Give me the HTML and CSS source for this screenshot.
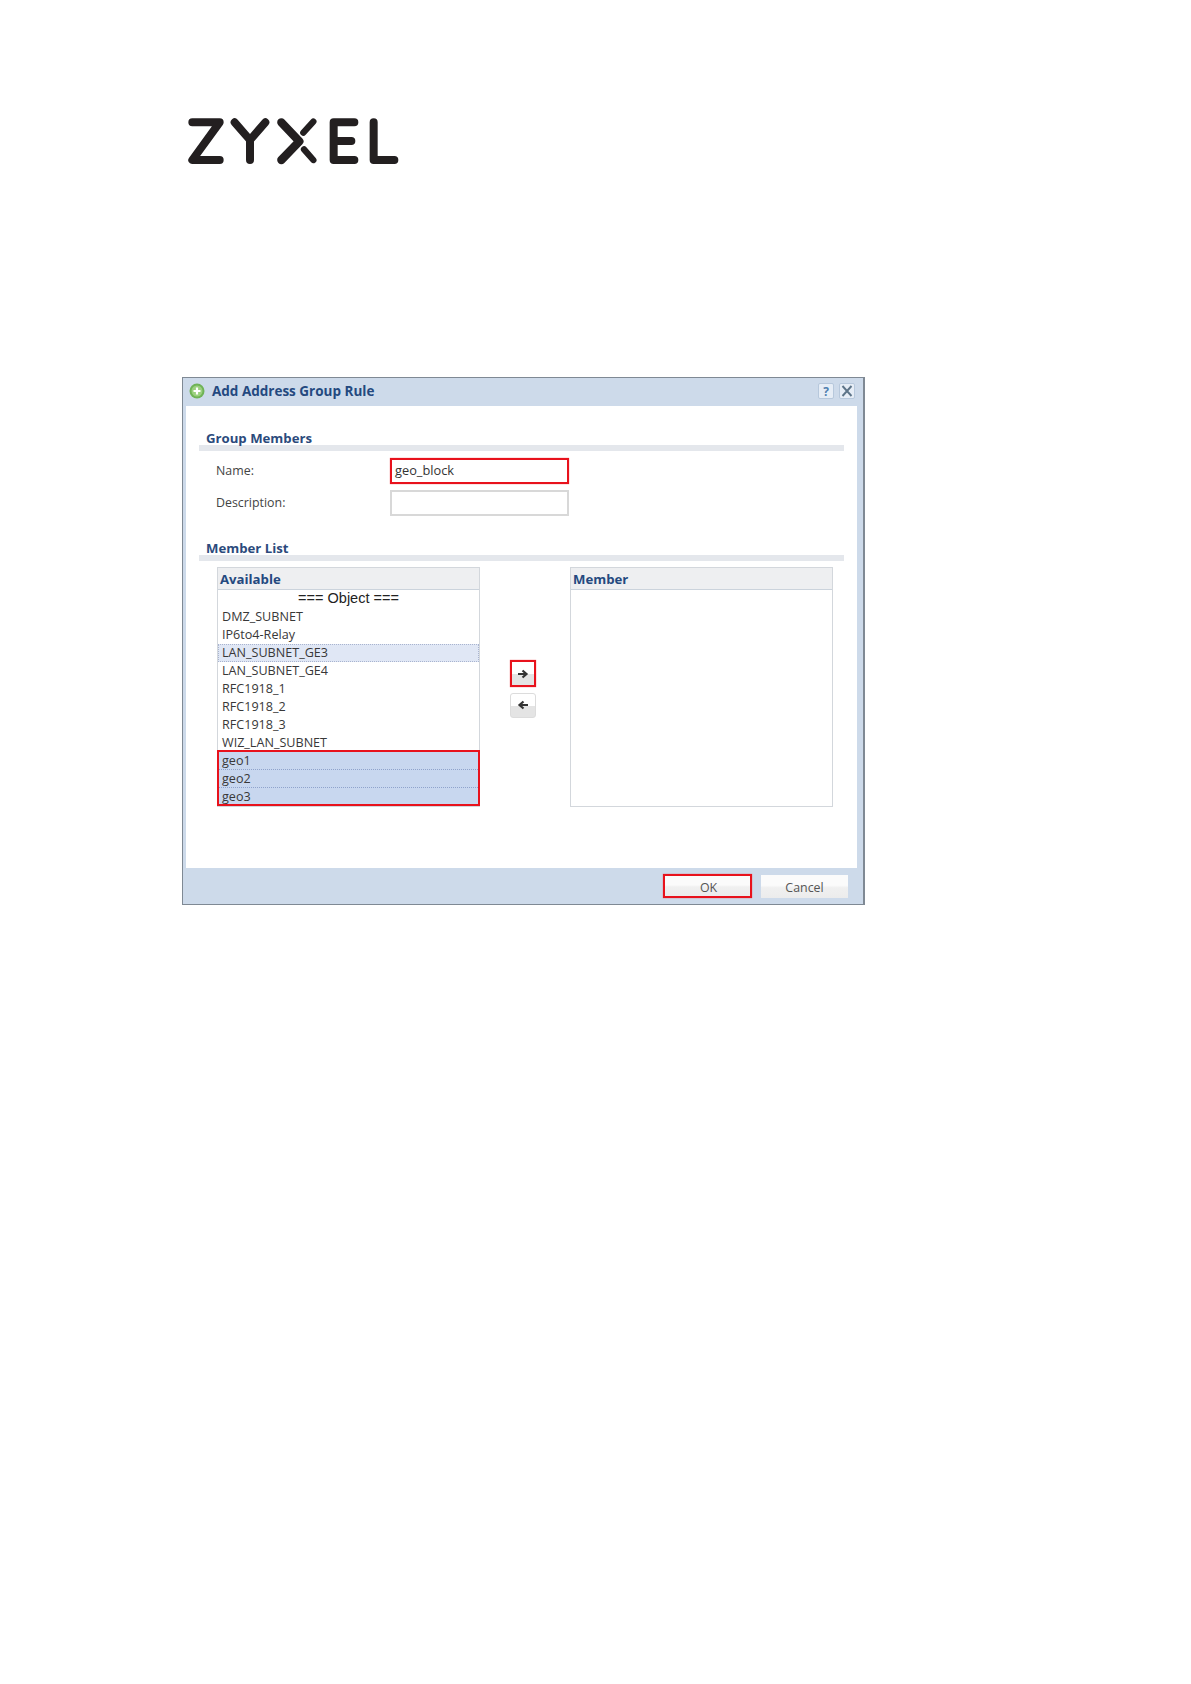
FILE: index.html
```html
<!DOCTYPE html>
<html lang="en">
<head>
<meta charset="utf-8">
<title>Add Address Group Rule</title>
<link rel="stylesheet" href="styles.css">
</head>
<body>
<main class="page">
  <svg class="logo" viewBox="0 0 750 270" width="250" height="90" role="img" aria-label="ZYXEL">
    <g fill="none" stroke="#231f20" stroke-width="24" stroke-linecap="round" stroke-linejoin="round">
      <path d="M67 97H149L67 210H149"/>
      <path d="M194 97L240 150L286 97M240 150V210"/>
      <path d="M334 97L388 154L334 210" stroke-width="25"/>
      <path d="M430 95L400 128M430 210L402 178" stroke-width="19"/>
      <path d="M553 97H491V210H553M491 153H544"/>
      <path d="M611 97V210H673"/>
    </g>
  </svg>

  <section class="dialog">
    <header class="titlebar">
      <svg class="add-icon" viewBox="0 0 16 16" width="16" height="16" aria-hidden="true">
        <circle cx="8" cy="8" r="7.5" fill="#6fb356"/>
        <circle cx="8" cy="8" r="5.5" fill="#9bd07f"/>
        <path d="M8 4.500v7M4.500 8h7" stroke="#fff" stroke-width="2.200"/>
      </svg>
      <h1 class="title">Add Address Group Rule</h1>
      <div class="tools">
        <span class="tool tool-help">?</span>
        <span class="tool">
          <svg viewBox="0 0 16 16" width="16" height="16" aria-hidden="true"><path d="M3.500 3l9 10M12.500 3l-9 10" stroke="#5d7488" stroke-width="1.900" fill="none"/></svg>
        </span>
      </div>
    </header>

    <div class="content">
      <h2 class="section-head">Group Members</h2>
      <div class="field field-first">
        <label class="field-label">Name:</label>
        <div class="input input-marked">geo_block</div>
      </div>
      <div class="field field-second">
        <label class="field-label">Description:</label>
        <div class="input"></div>
      </div>

      <h2 class="section-head section-second">Member List</h2>
      <div class="transfer">
        <div class="panel">
          <div class="panel-head">Available</div>
          <div class="row row-group">=== Object ===</div>
          <div class="row">DMZ_SUBNET</div>
          <div class="row">IP6to4-Relay</div>
          <div class="row row-soft">LAN_SUBNET_GE3</div>
          <div class="row">LAN_SUBNET_GE4</div>
          <div class="row">RFC1918_1</div>
          <div class="row">RFC1918_2</div>
          <div class="row">RFC1918_3</div>
          <div class="row">WIZ_LAN_SUBNET</div>
          <div class="marked-rows">
            <div class="row row-selected">geo1</div>
            <div class="row row-selected">geo2</div>
            <div class="row row-selected">geo3</div>
          </div>
        </div>

        <div class="movers">
          <button class="mover mover-marked" type="button" aria-label="Add">
            <svg viewBox="0 0 12 12" width="12" height="12" aria-hidden="true"><path d="M1 6h7M5.500 2.500L9.500 6l-4 3.500" fill="none" stroke="#333" stroke-width="2.200"/></svg>
          </button>
          <button class="mover" type="button" aria-label="Remove">
            <svg viewBox="0 0 12 12" width="12" height="12" aria-hidden="true"><path d="M11 6H4M6.500 2.500L2.500 6l4 3.500" fill="none" stroke="#333" stroke-width="2.200"/></svg>
          </button>
        </div>

        <div class="panel">
          <div class="panel-head">Member</div>
        </div>
      </div>
    </div>

    <footer class="footer">
      <button class="action action-marked" type="button">OK</button>
      <button class="action" type="button">Cancel</button>
    </footer>
  </section>
</main>
</body>
</html>
```

FILE: styles.css
```css
* { box-sizing: border-box; }

html, body { margin: 0; background: #fff; }

body {
  font-family: "Open Sans", "Noto Sans", "Liberation Sans", sans-serif;
  color: #3c3c3c;
}

.page {
  min-height: 1684px;
  padding: 90px 0 0 170px;
}

.logo { display: block; }

.dialog {
  display: flex;
  flex-direction: column;
  width: 683px;
  height: 528px;
  margin: 197px 0 0 12px;
  background: #cddaea;
  border: solid #7f8994;
  border-width: 1px 2px 1px 1px;
}

.titlebar {
  display: flex;
  align-items: center;
  flex: none;
  height: 28px;
  padding: 0 8px 2px 6px;
}

.add-icon { flex: none; }

.title {
  margin: 0 0 0 7px;
  font-size: 13.5px;
  font-weight: 700;
  color: #24497f;
}

.tools {
  display: flex;
  gap: 5px;
  margin-left: auto;
}

.tool {
  display: flex;
  align-items: center;
  justify-content: center;
  width: 16px;
  height: 16px;
  background: #e6edf6;
  border: 1px solid #b7c8dc;
  border-radius: 2px;
}

.tool svg { flex: none; }

.tool-help {
  font-size: 12px;
  font-weight: 700;
  color: #4f7fb0;
}

.content {
  flex: 1;
  margin: 0 6px 0 3px;
  padding: 24px 13px 0 13px;
  background: #fff;
}

.section-head {
  height: 21px;
  margin: 0;
  padding-left: 7px;
  font-size: 13.2px;
  line-height: 16px;
  font-weight: 700;
  color: #2b4a7c;
  border-bottom: 6px solid #e4e7ec;
}

.section-second { margin-top: 24px; }

.field {
  display: flex;
  align-items: center;
  padding-left: 17px;
}

.field-first { margin-top: 7px; }
.field-second { margin-top: 6px; }

.field-label {
  width: 174px;
  margin-top: -2px;
  font-size: 12.4px;
  color: #444;
}

.input {
  width: 179px;
  height: 26px;
  padding-left: 3px;
  font-size: 12.8px;
  line-height: 20px;
  color: #333;
  background: #fff;
  border: 2px solid #d8d8d8;
}

.input-marked {
  border-color: #e8121c;
  box-shadow: 0 0 1px rgba(232, 18, 28, 0.7);
}

.transfer {
  display: grid;
  grid-template-columns: 263px 90px 263px;
  height: 240px;
  margin: 6px 0 0 18px;
}

.panel {
  display: flex;
  flex-direction: column;
  border: 1px solid #d3d7dc;
}

.panel-head {
  flex: none;
  height: 22px;
  padding-left: 2px;
  font-size: 13.2px;
  line-height: 23px;
  font-weight: 700;
  color: #24497f;
  background: #eeeff1;
  border-bottom: 1px solid #cbd3dc;
}

.row {
  flex: none;
  height: 18px;
  padding-left: 4px;
  font-size: 12.6px;
  line-height: 18px;
  color: #383838;
}

.row-group {
  padding-left: 0;
  text-align: center;
  font-family: "Liberation Sans", sans-serif;
  font-size: 14.5px;
  line-height: 16px;
  color: #222;
}

.row-soft {
  background: #e0e7f5;
  border: dotted #a9b4cf;
  border-width: 1px;
  padding-left: 3px;
  line-height: 16px;
}

.marked-rows {
  flex: none;
  height: 56px;
  margin: -2px -1px 0;
  padding-top: 2px;
  background: #c8d7ef;
  outline: 2px solid #e8121c;
  outline-offset: -2px;
  box-shadow: inset 0 0 2px rgba(232, 18, 28, 0.8);
}

.row-selected {
  padding-left: 5px;
  border-bottom: 1px dotted #8fa3cc;
  line-height: 17px;
}

.row-selected:last-child { border-bottom: 0; }

.movers {
  display: flex;
  flex-direction: column;
  align-items: flex-start;
  gap: 6px;
  padding: 93px 0 0 30px;
}

.mover {
  display: flex;
  align-items: center;
  justify-content: center;
  width: 26px;
  height: 25px;
  padding: 0 0 2px;
  background: linear-gradient(#fff 0 50%, #e4e4e4 50% 100%);
  border: 1px solid #dcdcdc;
  border-radius: 3px;
}

.mover svg { flex: none; }

.mover-marked {
  height: 27px;
  padding: 0;
  border: 2px solid #e8121c;
  border-radius: 0;
  box-shadow: 0 0 1px rgba(232, 18, 28, 0.7);
}

.footer {
  display: flex;
  flex: none;
  justify-content: flex-end;
  align-items: flex-start;
  gap: 9px;
  height: 36px;
  padding: 7px 15px 0 0;
}

.action {
  width: 87px;
  height: 23px;
  padding: 2px 0 0;
  font-family: inherit;
  font-size: 12.4px;
  color: #555;
  background: linear-gradient(#fbfbfb 0 45%, #f0f0f0 55%, #ececec 100%);
  border: 0;
}

.action-marked {
  width: 89px;
  height: 24px;
  margin-top: -1px;
  padding-left: 2px;
  border: 2px solid #e8121c;
  box-shadow: 0 0 1px rgba(232, 18, 28, 0.7);
}
```
